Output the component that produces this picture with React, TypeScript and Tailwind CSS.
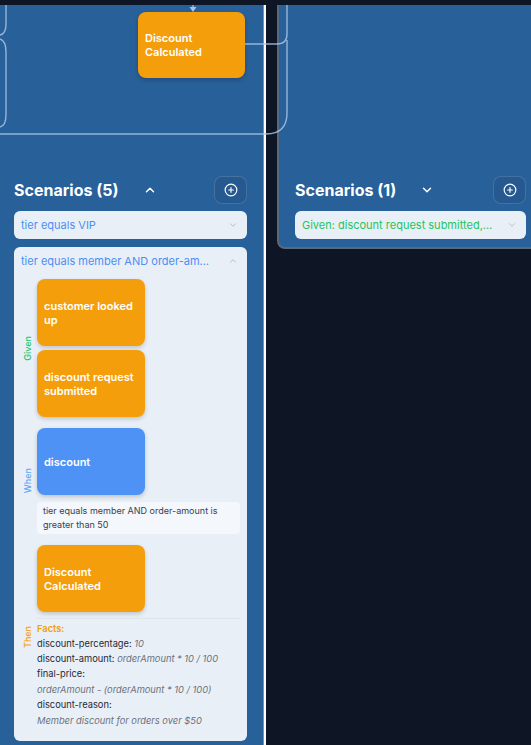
import React from 'react';
import { ChevronUp, ChevronDown, CirclePlus } from 'lucide-react';

const font = { fontFamily: 'Inter, "Noto Sans", sans-serif' };

const EventCard: React.FC<{ label: string; color?: 'orange' | 'blue' }> = ({ label, color = 'orange' }) => (
  <div
    className={`flex h-[67px] w-[108px] items-center rounded-lg px-[7px] text-[11px] font-semibold leading-[14px] text-white shadow-[0_2px_4px_rgba(0,0,0,0.18)] ${
      color === 'blue' ? 'bg-[#4e92f6]' : 'bg-[#f59e0b]'
    }`}
  >
    {label}
  </div>
);

const SideLabel: React.FC<{ text: string; className: string }> = ({ text, className }) => (
  <div className="flex w-[14px] shrink-0 justify-center self-center">
    <span className={`rotate-180 text-[9px] font-medium leading-none [writing-mode:vertical-rl] ${className}`}>
      {text}
    </span>
  </div>
);

const SectionHeader: React.FC<{ title: string; open: boolean }> = ({ title, open }) => (
  <div className="flex h-[28px] items-center">
    <h2 className="text-[16px] font-bold text-white">{title}</h2>
    <button className="ml-[21px] flex h-5 w-5 items-center justify-center text-white">
      {open ? <ChevronUp className="h-[14px] w-[14px]" strokeWidth={2.5} /> : <ChevronDown className="h-[14px] w-[14px]" strokeWidth={2.5} />}
    </button>
    <button className="ml-auto flex h-[28px] w-[33px] items-center justify-center rounded-lg border border-white/15 bg-[#25598f]">
      <CirclePlus className="h-[14px] w-[14px] text-white" strokeWidth={2} />
    </button>
  </div>
);

const facts = [
  { key: 'discount-percentage', value: '10', wrap: false },
  { key: 'discount-amount', value: 'orderAmount * 10 / 100', wrap: false },
  { key: 'final-price', value: 'orderAmount - (orderAmount * 10 / 100)', wrap: true },
  { key: 'discount-reason', value: 'Member discount for orders over $50', wrap: true },
];

export default function App() {
  return (
    <div className="relative h-[745px] w-[531px] overflow-hidden bg-[#0e1626] pt-[5px]" style={font}>
      <div className="flex h-full items-start">
        {/* Left lane (selected) */}
        <div className="h-[740px] w-[266px] shrink-0 border-r-2 border-white bg-[#28609a] pr-[17px] pl-[14px] shadow-[inset_-1px_0_0_#7d8ea6]">
          {/* canvas */}
          <div className="relative h-[171px]">
            <div className="absolute top-[7px] left-[124px] flex h-[66px] w-[107px] items-center rounded-lg bg-[#f59e0b] px-[7px] text-[11px] font-semibold leading-[14px] text-white shadow-[0_2px_4px_rgba(0,0,0,0.2)]">
              Discount Calculated
            </div>
          </div>

          <SectionHeader title="Scenarios (5)" open />

          <div className="mt-[7px] flex flex-col gap-2">
            <div className="flex h-[28px] items-center justify-between rounded-md bg-[#e9eff6] pr-[9px] pl-[7px]">
              <span className="text-[11px] text-[#4b8ef5]">tier equals VIP</span>
              <ChevronDown className="h-[10px] w-[10px] text-[#a9b4c2]" />
            </div>

            <div className="rounded-md bg-[#e9eff6] pb-[13px]">
              <div className="flex h-[28px] items-center justify-between pr-[9px] pl-[7px]">
                <span className="max-w-[190px] truncate text-[11px] text-[#4b8ef5]">
                  tier equals member AND order-amount is greater than 50
                </span>
                <ChevronUp className="h-[10px] w-[10px] text-[#a9b4c2]" />
              </div>

              <div className="flex flex-col gap-[11px] pt-[4px] pr-[7px] pl-[6px]">
                {/* Given */}
                <div className="flex gap-[3px]">
                  <SideLabel text="Given" className="text-[#22c55e]" />
                  <div className="flex flex-col gap-[4px]">
                    <EventCard label="customer looked up" />
                    <EventCard label="discount request submitted" />
                  </div>
                </div>

                {/* When */}
                <div className="flex gap-[3px]">
                  <SideLabel text="When" className="text-[#60a5fa]" />
                  <div className="flex flex-1 flex-col gap-[7px]">
                    <EventCard label="discount" color="blue" />
                    <div className="rounded bg-[#f4f7fb] px-[6px] py-[2px] text-[9px] leading-[14px] text-[#374151]">
                      tier equals member AND order-amount is greater than 50
                    </div>
                  </div>
                </div>

                {/* Then */}
                <div className="flex gap-[3px]">
                  <SideLabel text="Then" className="text-[#f59e0b]" />
                  <div className="flex flex-1 flex-col">
                    <EventCard label="Discount Calculated" />
                    <div className="mt-[6px] border-t border-[#dde4ee] pt-[2px] text-[9.3px] leading-[15px]">
                      <div className="font-semibold text-[#f59e0b]">Facts:</div>
                      {facts.map((f) =>
                        f.wrap ? (
                          <div key={f.key}>
                            <div className="text-[#1f2937]">{f.key}:</div>
                            <div className="mt-[1px] italic text-[#6b7280]">{f.value}</div>
                          </div>
                        ) : (
                          <div key={f.key} className="text-[#1f2937]">
                            {f.key}: <span className="italic text-[#6b7280]">{f.value}</span>
                          </div>
                        )
                      )}
                    </div>
                  </div>
                </div>
              </div>
            </div>
          </div>
        </div>

        {/* Right lane */}
        <div className="ml-[11px] w-[266px] shrink-0 rounded-bl-lg border-b-2 border-l-2 border-[#5a687c] bg-[#28609a] pb-2 pl-[16px] pr-[17px]">
          <div className="h-[171px]" />
          <SectionHeader title="Scenarios (1)" open={false} />
          <div className="mt-[7px] flex h-[28px] items-center justify-between rounded-md bg-[#e9eff6] pr-[9px] pl-[7px]">
            <span className="max-w-[192px] truncate text-[11px] text-[#22c55e]">
              Given: discount request submitted, customer looked up
            </span>
            <ChevronDown className="h-[10px] w-[10px] text-[#a9b4c2]" />
          </div>
        </div>
      </div>

      {/* flow edges */}
      <svg className="pointer-events-none absolute top-0 left-0" width="531" height="150" fill="none">
        <g stroke="#a9c3e2" strokeWidth="1.4" strokeOpacity="0.85">
          <path d="M245 44 H277 Q287 44 287 34 V5" />
          <path d="M0 134 H266 Q287 134 287 113 V40" />
          <path d="M6 5 V24 Q6 34 0 35" />
          <path d="M0 39 Q6 41 6 52 V114 Q6 126 0 127" />
          <path d="M193 5 V8" />
        </g>
        <path d="M189.5 7 L196.5 7 L193 12 Z" fill="#a9c3e2" />
      </svg>
      <div className="absolute top-0 left-0 h-[5px] w-full bg-[#0e1626]" />
    </div>
  );
}
